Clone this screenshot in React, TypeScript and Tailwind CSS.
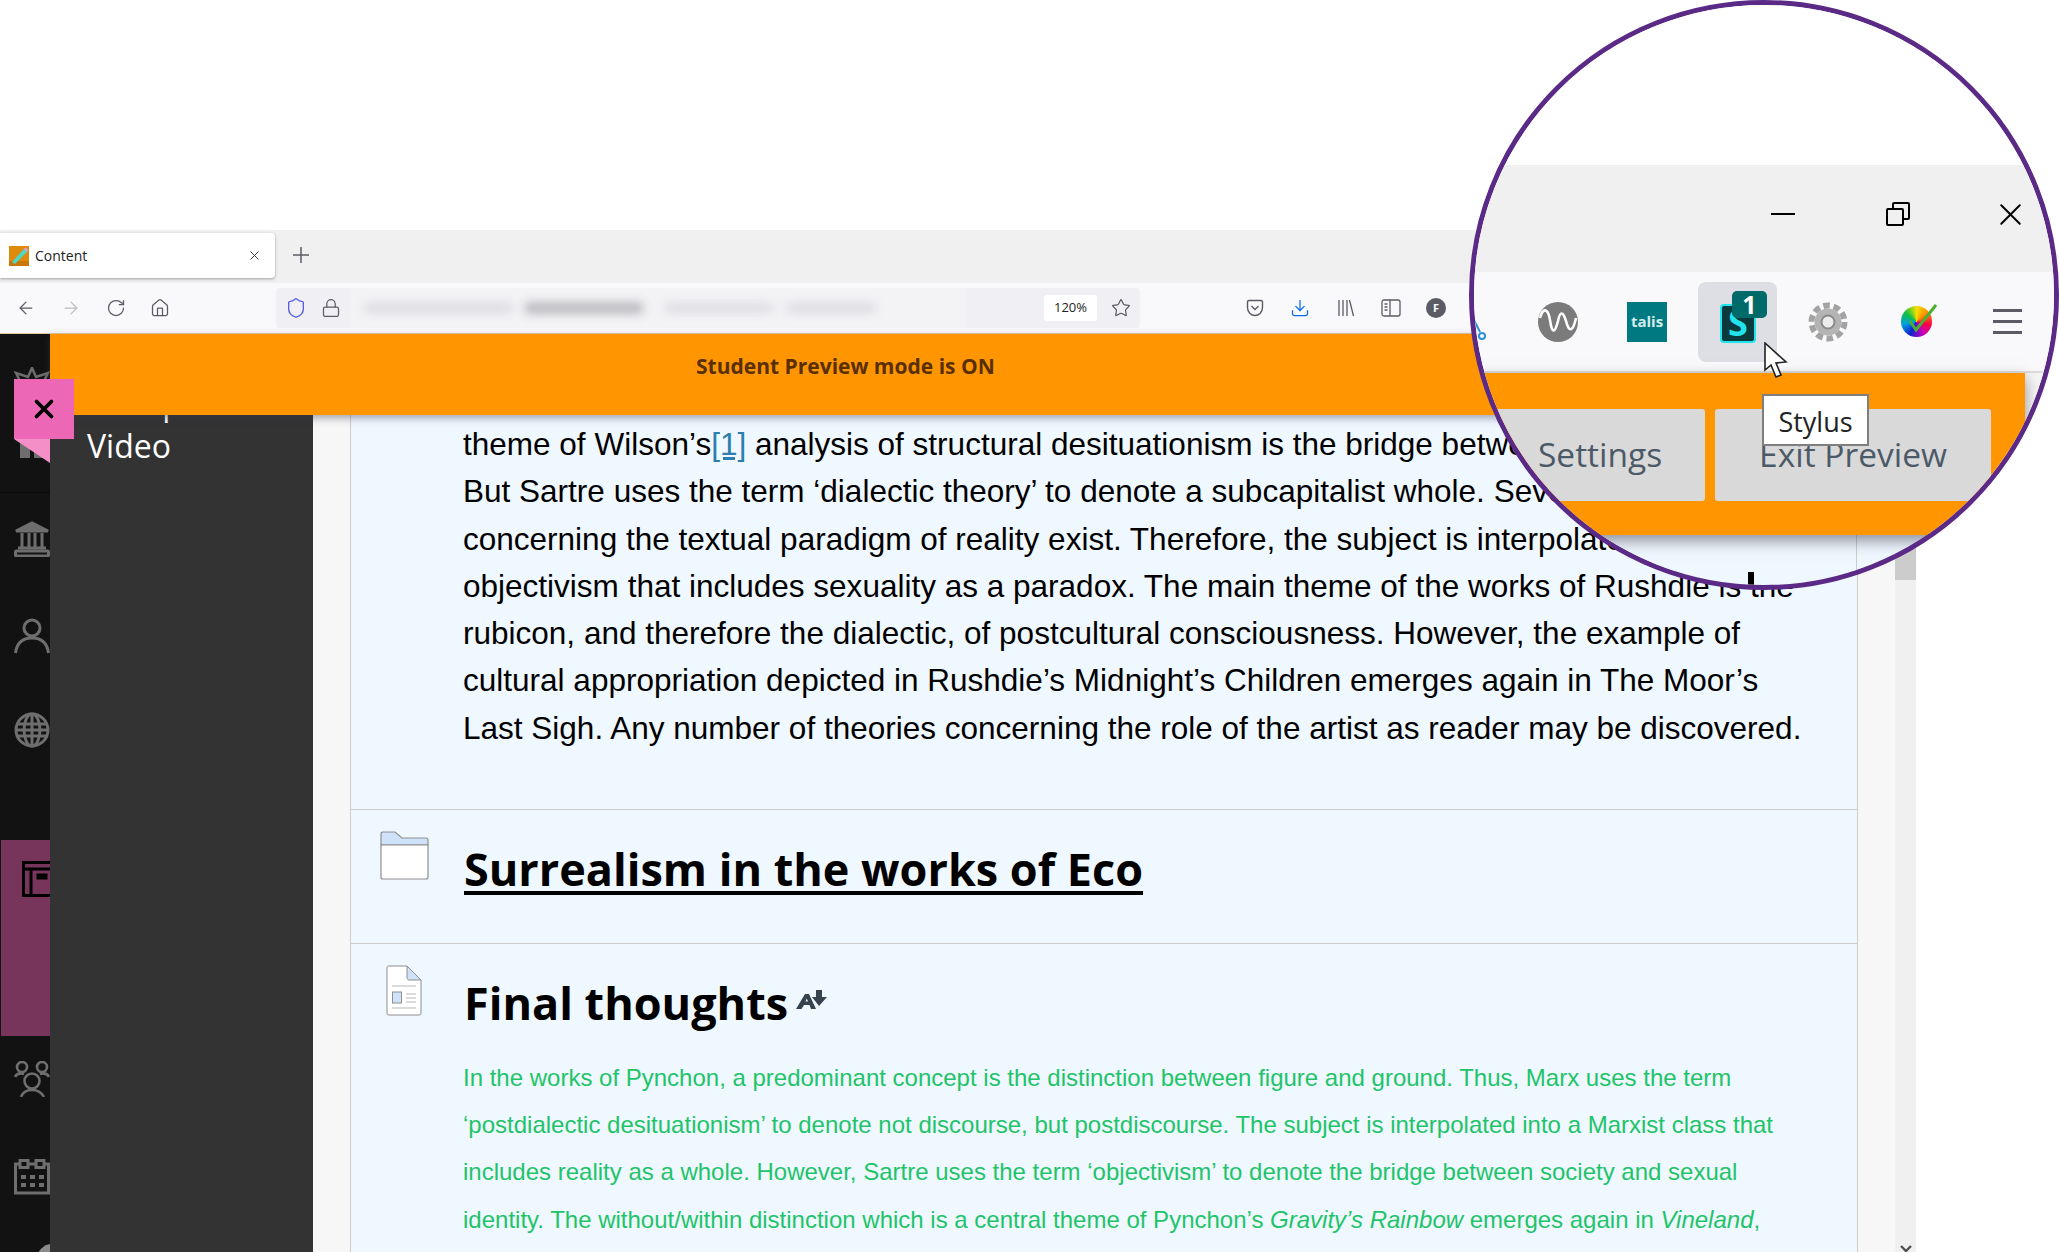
import { ArrowLeft, ArrowRight, Download, Home, Lock, RotateCw, Shield, Star, X } from 'lucide-react';

const bodyLines = [
  'analysis of structural desituationism is the bridge between',
  'But Sartre uses the term ‘dialectic theory’ to denote a subcapitalist whole. Several',
  'concerning the textual paradigm of reality exist. Therefore, the subject is interpolated into',
  'objectivism that includes sexuality as a paradox. The main theme of the works of Rushdie is the',
  'rubicon, and therefore the dialectic, of postcultural consciousness. However, the example of',
  'cultural appropriation depicted in Rushdie’s Midnight’s Children emerges again in The Moor’s',
  'Last Sigh. Any number of theories concerning the role of the artist as reader may be discovered.',
];

function Favicon() {
  return (
    <svg width="20" height="20" viewBox="0 0 20 20" className="shrink-0">
      <rect width="20" height="20" fill="#e08a0c" />
      <rect y="15" width="20" height="5" fill="#c9760a" />
      <path d="M3 16 L15 3 L18 6 L6 18 Z" fill="#4fd8c8" />
      <path d="M15 3 L17 1.5 L19 4 L18 6 Z" fill="#d9a0e8" />
    </svg>
  );
}

function SideIcon({ name }: { name: string }) {
  const cls = 'ml-[14px] h-[36px] w-[36px] shrink-0';
  if (name === 'bank') {
    return (
      <svg viewBox="0 0 36 36" className={cls} fill="none" stroke="#6e6e6e" strokeWidth="3">
        <path d="M2 10 L18 2 L34 10 Z" fill="#6e6e6e" />
        <path d="M8 12 V26 M15 12 V26 M21 12 V26 M28 12 V26 M4 27 H32" />
        <rect x="1.5" y="30" width="33" height="5" rx="1" />
      </svg>
    );
  }
  if (name === 'person') {
    return (
      <svg viewBox="0 0 36 36" className={cls} fill="none" stroke="#6e6e6e" strokeWidth="3">
        <circle cx="18" cy="10" r="8" />
        <path d="M1.5 35 C3 24 10 20 18 20 C26 20 33 24 34.5 35" />
      </svg>
    );
  }
  if (name === 'globe') {
    return (
      <svg viewBox="0 0 36 36" className={cls} fill="none" stroke="#6e6e6e" strokeWidth="3">
        <circle cx="18" cy="18" r="16" />
        <ellipse cx="18" cy="18" rx="8" ry="16" />
        <path d="M18 2 V34 M3 12 H33 M2 18 H34 M3 24 H33" />
      </svg>
    );
  }
  if (name === 'group') {
    return (
      <svg viewBox="0 0 36 36" className={cls} fill="none" stroke="#6e6e6e" strokeWidth="2.6">
        <circle cx="8" cy="6" r="5" />
        <circle cx="28" cy="6" r="5" />
        <circle cx="18" cy="20" r="7.5" />
        <path d="M1 16 C3 12 7 12 10 13 M35 16 C33 12 29 12 26 13 M7 36 C9 30 14 29 18 29 C22 29 27 30 30 36" />
      </svg>
    );
  }
  return (
    <svg viewBox="0 0 36 36" className={cls} fill="none" stroke="#6e6e6e" strokeWidth="3">
      <rect x="1.5" y="5" width="33" height="29" />
      <rect x="6" y="1.5" width="8" height="7" fill="#121212" />
      <rect x="22" y="1.5" width="8" height="7" fill="#121212" />
      <path d="M7 18 H12 M16 18 H21 M25 18 H30 M7 26 H12 M16 26 H21 M25 26 H30" strokeWidth="4" />
    </svg>
  );
}

function Sidebar() {
  return (
    <div className="flex h-full w-[50px] shrink-0 flex-col overflow-hidden bg-[#121212]">
      <div className="h-[159px] shrink-0 border-b border-[#0a0a0a] pl-[14px] pt-[33px]">
        <svg viewBox="0 0 36 24" className="h-[24px] w-[36px]" fill="none" stroke="#6e6e6e" strokeWidth="2.5">
          <path d="M18 1 L22 10 L34 6 L28 18 H8 L2 6 L14 10 Z" />
        </svg>
        <div className="ml-[6px] mt-[49px] flex gap-[4px]">
          <div className="h-[18px] w-[10px] bg-[#6e6e6e]" />
          <div className="h-[18px] w-[10px] bg-[#6e6e6e]" />
        </div>
      </div>
      <div className="flex h-[95px] shrink-0 items-center pb-[4px]"><SideIcon name="bank" /></div>
      <div className="flex h-[95px] shrink-0 items-center"><SideIcon name="person" /></div>
      <div className="flex h-[95px] shrink-0 items-center pb-[2px]"><SideIcon name="globe" /></div>
      <div className="ml-px mt-[62px] h-[196px] shrink-0 bg-[#78355c] pl-[21px] pt-[21px]">
        <svg viewBox="0 0 36 36" className="h-[36px] w-[36px]" fill="none" stroke="#000" strokeWidth="3">
          <rect x="1.5" y="1.5" width="40" height="33" />
          <path d="M1.5 8 H36 M9 8 V34" />
          <rect x="15" y="13" width="10" height="5" fill="#000" strokeWidth="1" />
        </svg>
      </div>
      <div className="flex h-[88px] shrink-0 items-center pb-[2px]"><SideIcon name="group" /></div>
      <div className="mt-[6px] flex h-[95px] shrink-0 items-center pb-[2px]"><SideIcon name="calendar" /></div>
      <div className="ml-[37px] mt-[19px] h-[30px] w-[30px] shrink-0 rounded-full bg-[#8a8a8a]" />
    </div>
  );
}

function Toolbar() {
  return (
    <div className="flex h-[51px] shrink-0 items-center border-b border-[#e3c9a4] bg-[#f9f9fb] text-[#5b5b66]">
      <ArrowLeft className="ml-[16px] h-[20px] w-[20px]" strokeWidth={1.5} />
      <ArrowRight className="ml-[25px] h-[20px] w-[20px] text-[#bdbdc2]" strokeWidth={1.5} />
      <RotateCw className="ml-[25px] h-[20px] w-[20px]" strokeWidth={1.5} />
      <Home className="ml-[24px] h-[20px] w-[20px]" strokeWidth={1.5} />
      <div className="relative ml-[106px] flex h-[40px] w-[864px] items-center overflow-hidden rounded-[4px] bg-[#f0f0f4]">
        <Shield className="ml-[9px] h-[22px] w-[22px] text-[#5a5de0]" strokeWidth={1.5} />
        <Lock className="ml-[14px] h-[22px] w-[20px]" strokeWidth={1.5} />
        <div className="ml-[9px] flex h-[40px] w-[616px] items-center bg-[#f3f3f6]">
          <div className="ml-[14px] h-[10px] w-[150px] rounded-full bg-[#dcdce0] blur-[5px]" />
          <div className="ml-[10px] h-[12px] w-[120px] rounded-full bg-[#bcbcc0] blur-[5px]" />
          <div className="ml-[20px] h-[10px] w-[110px] rounded-full bg-[#dedee2] blur-[5px]" />
          <div className="ml-[12px] h-[10px] w-[90px] rounded-full bg-[#dcdce0] blur-[5px]" />
        </div>
        <div className="ml-[78px] flex h-[26px] w-[53px] items-center justify-center rounded-[3px] bg-white text-[13px] text-[#222]">120%</div>
        <Star className="ml-[14px] h-[20px] w-[20px]" strokeWidth={1.5} />
      </div>
      <svg viewBox="0 0 18 18" className="ml-[106px] h-[18px] w-[18px]" fill="none" stroke="currentColor" strokeWidth="1.4">
        <path d="M1.5 3 C1.5 2 2.2 1.5 3 1.5 H15 C15.8 1.5 16.5 2 16.5 3 V8.5 C16.5 13 13 16.5 9 16.5 C5 16.5 1.5 13 1.5 8.5 Z" />
        <path d="M5.5 7 L9 10.5 L12.5 7" />
      </svg>
      <Download className="ml-[26px] h-[20px] w-[20px] text-[#0a6cf0]" strokeWidth={1.5} />
      <svg viewBox="0 0 18 18" className="ml-[27px] h-[18px] w-[18px]" fill="none" stroke="currentColor" strokeWidth="1.3">
        <path d="M2 1 V17 M6 1 V17 M10 1 V17 M12.5 1 L16.5 17" />
      </svg>
      <svg viewBox="0 0 20 18" className="ml-[26px] h-[18px] w-[20px]" fill="none" stroke="currentColor" strokeWidth="1.3">
        <rect x="1" y="1" width="18" height="16" rx="2" />
        <path d="M9 1 V17 M3.5 5 H6.5 M3.5 8 H6.5 M3.5 11 H6.5" />
      </svg>
      <div className="ml-[25px] flex h-[20px] w-[20px] items-center justify-center rounded-full bg-[#5b5b66] text-[11px] font-bold text-white">F</div>
    </div>
  );
}

function Main() {
  return (
    <div className="flex min-h-0 flex-1 overflow-hidden bg-[#f7f7f7] pl-[37px]">
      <div className="w-[1508px] shrink-0 border-x border-[#cccccc] bg-[#eff7ff]">
        <div className="h-[395px] whitespace-nowrap border-b border-[#cccccc] pl-[112px] pt-[6px] font-['Liberation_Sans',sans-serif] text-[31.53px] leading-[47.3px] text-black">
          {bodyLines.map((line, i) => (
            <div key={i}>
              {i === 0 && (
                <>theme of Wilson’s<span className="text-[#2b7fb0] underline">[1]</span>{' '}</>
              )}
              {line}
            </div>
          ))}
        </div>
        <div className="flex h-[134px] border-b border-[#cccccc]">
          <svg viewBox="0 0 49 49" className="ml-[29px] mt-[21px] h-[49px] w-[49px]" fill="none" stroke="#8f8f8f" strokeWidth="1.2">
            <path d="M1 3 C1 1.5 1.5 1 3 1 H15 L22 7 H46 C47.5 7 48 7.5 48 9 V14 H1 Z" fill="#cfe2fa" />
            <path d="M1 14 H48 V46 C48 47.5 47.5 48 46 48 H3 C1.5 48 1 47.5 1 46 Z" fill="#fff" />
          </svg>
          <div className="ml-[35px] mt-[31px] whitespace-nowrap font-['Open_Sans',sans-serif] text-[45px] font-bold leading-[56px] text-black underline underline-offset-[5px]">
            Surrealism in the works of Eco
          </div>
        </div>
        <div className="flex">
          <svg viewBox="0 0 36 51" className="ml-[35px] mt-[21px] h-[51px] w-[36px] shrink-0" fill="#fff" stroke="#8f8f8f" strokeWidth="1">
            <path d="M1 3 C1 1.5 1.5 1 3 1 H21 L35 15 V48 C35 49.5 34.5 50 33 50 H3 C1.5 50 1 49.5 1 48 Z" />
            <path d="M21 1 V13 C21 14 22 15 23 15 H35 Z" fill="#cfe2fa" />
            <path d="M6 21 H30 M6 43 H30 M20 29 H30 M20 33 H30 M20 37 H30" stroke="#cfcfcf" strokeWidth="1.5" />
            <rect x="6.5" y="27" width="9" height="11" fill="#cfe2fa" />
          </svg>
          <div className="min-w-0">
            <div className="ml-[42px] mt-[31px] flex items-start whitespace-nowrap font-['Open_Sans',sans-serif] text-[45px] font-bold leading-[56px] text-black">
              Final thoughts
              <svg viewBox="0 0 31 20" className="ml-[8px] mt-[15px] h-[20px] w-[31px]" fill="#36424d">
                <path d="M0 19 L9 4 H13 L20 19 H15 L13.5 15 H8 L5.5 19 Z M9.5 11.5 H12 L10.8 8.5 Z" />
                <path d="M20 0 H26 V7 H31 L23 16 L16 7 H20 Z" />
              </svg>
            </div>
            <div className="ml-[41px] mt-[23px] whitespace-nowrap font-['Liberation_Sans',sans-serif] text-[24px] leading-[47.2px] text-[#1fc46a]">
              <div>In the works of Pynchon, a predominant concept is the distinction between figure and ground. Thus, Marx uses the term</div>
              <div>‘postdialectic desituationism’ to denote not discourse, but postdiscourse. The subject is interpolated into a Marxist class that</div>
              <div>includes reality as a whole. However, Sartre uses the term ‘objectivism’ to denote the bridge between society and sexual</div>
              <div>
                identity. The without/within distinction which is a central theme of Pynchon’s <i>Gravity’s Rainbow</i> emerges again in <i>Vineland</i>,
              </div>
            </div>
          </div>
        </div>
      </div>
      <div className="w-[37px] shrink-0" />
      <div className="flex w-[21px] shrink-0 flex-col justify-between bg-[#f0f0f0]">
        <div className="h-[165px] bg-[#cccccc]" />
        <svg viewBox="0 0 12 8" className="mx-auto mb-[-1px] h-[8px] w-[12px]" fill="none" stroke="#505050" strokeWidth="2.4">
          <path d="M1 1 L6 6 L11 1" />
        </svg>
      </div>
    </div>
  );
}

function Lens() {
  return (
    <div className="absolute left-[1469px] top-0 z-30 h-[590px] w-[590px] overflow-hidden rounded-full border-[5px] border-[#5b2a86] bg-[#eff7ff]">
      <div className="h-[161px] border-b border-[#eeeeee] bg-white" />
      <div className="flex h-[106px] items-center bg-[#f0f0f0] pb-[10px] text-black">
        <div className="ml-[297px] h-[2px] w-[24px] bg-black" />
        <svg viewBox="0 0 24 24" className="ml-[91px] h-[24px] w-[24px]" fill="none" stroke="#000" strokeWidth="2">
          <rect x="1" y="7" width="16" height="16" rx="1" />
          <path d="M7 7 V2 C7 1.5 7.5 1 8 1 H22 C22.5 1 23 1.5 23 2 V16 C23 16.5 22.5 17 22 17 H17" />
        </svg>
        <X className="ml-[82px] h-[37px] w-[37px]" strokeWidth={1.3} />
      </div>
      <div className="flex h-[101px] items-center border-b-2 border-[#dcdcdc] bg-[#f9f9fb]">
        <svg viewBox="0 0 14 40" className="mt-[20px] h-[40px] w-[14px]" fill="none" stroke="#2b8fd8" strokeWidth="2">
          <path d="M0 8 L6 20" />
          <circle cx="8" cy="24" r="3" />
        </svg>
        <svg viewBox="0 0 40 40" className="ml-[50px] h-[40px] w-[40px]">
          <circle cx="20" cy="20" r="20" fill="#7b7b7b" />
          <path d="M2 16 C5 5 10 6 12 18 C14 33 17 31 20 19 C22 9 25 9 28 19 C31 31 35 30 38 16" fill="none" stroke="#fff" strokeWidth="2.6" />
        </svg>
        <div className="ml-[49px] flex h-[40px] w-[40px] items-center justify-center bg-[#007a80] font-['Open_Sans',sans-serif] text-[15px] font-bold text-[#d5ecec]">talis</div>
        <div className="relative ml-[31px] h-[80px] w-[79px] rounded-[8px] bg-[#dedfe4]">
          <div className="absolute left-[22px] top-[22px] flex h-[39px] w-[36px] items-center justify-center rounded-[4px] border-2 border-[#1fe5ee] bg-[#0b3a3e] font-['Open_Sans',sans-serif] text-[36px] font-bold leading-none text-[#22e3ec]">S</div>
          <div className="absolute left-[34px] top-[9px] flex h-[27px] w-[35px] items-center justify-center rounded-[5px] bg-[#00696a] font-['Open_Sans',sans-serif] text-[25px] font-bold leading-none text-white">1</div>
        </div>
        <svg viewBox="0 0 40 40" className="ml-[31px] h-[40px] w-[40px]">
          <circle cx="20" cy="20" r="16.5" fill="none" stroke="#a3a3a3" strokeWidth="6" strokeDasharray="6.6 3.76" />
          <circle cx="20" cy="20" r="13.5" fill="#b4b4b4" />
          <circle cx="20" cy="20" r="6.5" fill="#ececec" stroke="#8a8a8a" strokeWidth="2" />
        </svg>
        <div className="relative ml-[53px] h-[36px] w-[36px]">
          <div className="absolute left-0 top-[2px] h-[31px] w-[31px] rounded-full bg-[conic-gradient(#f4e000,#ff8a00,#ff0040,#c000c0,#1020d0,#00a0e0,#10c040,#f4e000)]" />
          <svg viewBox="0 0 36 36" className="absolute inset-0 h-[36px] w-[36px]" fill="none" stroke="#4caf2f" strokeWidth="3">
            <path d="M9 17 L15 26 L35 1" />
          </svg>
        </div>
        <div className="ml-[56px] flex w-[29px] flex-col gap-[8px]">
          <div className="h-[3px] bg-[#5b5b66]" />
          <div className="h-[3px] bg-[#5b5b66]" />
          <div className="h-[3px] bg-[#5b5b66]" />
        </div>
      </div>
      <div className="flex h-[162px]">
        <div className="relative z-10 flex h-[162px] w-[551px] shrink-0 bg-[#ff9500] pt-[36px] font-['Open_Sans',sans-serif] text-[33.5px] text-[#4c5a68] shadow-[0_6px_14px_rgba(60,60,70,0.55)]">
          <div className="flex h-[92px] w-[231px] items-center rounded-[3px] bg-[#d9d9d9] pb-[2px] pl-[64px]">Settings</div>
          <div className="ml-[10px] flex h-[92px] w-[276px] items-center justify-center rounded-[3px] bg-[#d9d9d9] pb-[2px]">Exit Preview</div>
        </div>
        <div className="flex-1 bg-[#f5f5f5]" />
      </div>
      <div className="h-[36px] w-[383px] border-r border-[#cccccc] bg-[#eff7ff]" />
      <div className="absolute left-[274px] top-[567px] h-[15px] w-[6px] bg-black" />
      <svg viewBox="0 0 24 37" className="absolute left-[290px] top-[337px] z-20 h-[37px] w-[24px]" fill="#fff" stroke="#222" strokeWidth="1.6">
        <path d="M1 1 V28 L7 23 L12 35 L17 33 L12 21 L22 20 Z" />
      </svg>
      <div className="absolute left-[288px] top-[389px] z-20 flex h-[52px] w-[107px] items-center justify-center border-2 border-[#7f7f7f] bg-white pt-[4px] font-['Open_Sans',sans-serif] text-[27px] text-[#222]">Stylus</div>
    </div>
  );
}

export default function App() {
  return (
    <div className="relative h-[1252px] w-[2059px] overflow-hidden bg-white font-['Open_Sans',sans-serif]">
      <div className="h-[230px]" />
      <div className="flex h-[1022px] w-[1916px] flex-col">
        <div className="flex h-[53px] shrink-0 items-start bg-[#f0f0f0] pt-[3px]">
          <div className="flex h-[45px] w-[275px] items-center rounded-r-[4px] bg-white pl-[9px] shadow-[0_1px_3px_rgba(0,0,0,0.35)]">
            <Favicon />
            <span className="ml-[6px] text-[14px] text-[#222]">Content</span>
            <X className="ml-[160px] h-[15px] w-[15px] text-[#333]" strokeWidth={1.5} />
          </div>
          <div className="ml-[18px] mt-[14px] text-[#5b5b66]">
            <svg viewBox="0 0 16 16" className="h-[16px] w-[16px]" fill="none" stroke="currentColor" strokeWidth="1.5">
              <path d="M8 0 V16 M0 8 H16" />
            </svg>
          </div>
        </div>
        <Toolbar />
        <div className="flex min-h-0 flex-1">
          <Sidebar />
          <div className="flex min-w-0 flex-1 flex-col">
            <div className="relative z-20 flex h-[81px] shrink-0 items-center bg-[#ff9500] pb-[16px] pl-[646px] text-[21px] font-bold text-[#583000] shadow-[0_3px_8px_rgba(60,60,70,0.45)]">
              Student Preview mode is ON
            </div>
            <div className="flex min-h-0 flex-1">
              <div className="w-[263px] shrink-0 overflow-hidden bg-[#333333] pl-[37px] text-[32px] leading-[43px] text-white">
                <div className="mt-[-34px]">Group</div>
                <div>Video</div>
              </div>
              <Main />
            </div>
          </div>
        </div>
      </div>

      <div className="absolute left-[14px] top-[379px] z-20 flex h-[60px] w-[60px] items-center justify-center bg-[#ec68b7] text-black">
        <X className="h-[30px] w-[30px]" strokeWidth={3} />
      </div>
      <svg viewBox="0 0 36 24" className="absolute left-[14px] top-[439px] z-20 h-[24px] w-[36px]">
        <path d="M0 0 H36 V24 Z" fill="#f48fc8" />
      </svg>
      <Lens />
    </div>
  );
}
